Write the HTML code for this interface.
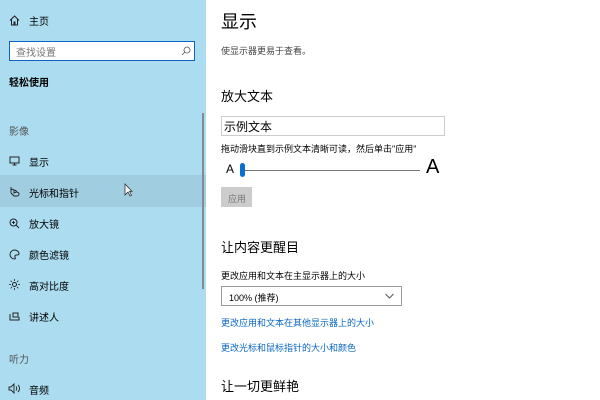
<!DOCTYPE html><html><head><meta charset="utf-8"><style>
*{margin:0;padding:0;box-sizing:border-box}
body{width:600px;height:400px;overflow:hidden;background:#fff;font-family:"Liberation Sans","Noto Sans CJK SC",sans-serif;position:relative;color:#000}
#sb{position:absolute;left:0;top:0;width:206px;height:400px;background:#acdcef}
.t{position:absolute;white-space:nowrap;font-size:10px}
.ic{position:absolute;font-size:10px}
</style></head><body>
<div id="sb">
<div style="position:absolute;left:0;top:175px;width:206px;height:32px;background:#a0cee0"></div>
<div style="position:absolute;left:202px;top:113px;width:2px;height:176px;background:#7d8e96"></div>
<svg class="ic" style="left:9px;top:15px" width="11" height="11" viewBox="0 0 11 11"><path d="M1 5.5L5.5 1 10 5.5M2.5 4v6h2.5V7h1v3h2.5V4" fill="none" stroke="#222" stroke-width="1"/></svg>
<div class="t" style="left:29px;top:13px">主页</div>
<div style="position:absolute;left:9px;top:41px;width:186px;height:20px;background:#fff;border:1px solid #0a66c2"></div>
<div class="t" style="left:16px;top:44px;color:#777">查找设置</div>
<svg class="ic" style="left:181px;top:46px" width="10" height="10" viewBox="0 0 10 10"><circle cx="6" cy="4" r="3" fill="none" stroke="#555" stroke-width=".8"/><path d="M4 6L1 9" stroke="#555" stroke-width=".8"/></svg>
<div class="t" style="left:9px;top:74px;font-weight:bold">轻松使用</div>
<div class="t" style="left:9px;top:123px;color:#555">影像</div>
<svg class="ic" style="left:9px;top:156px" width="11" height="10" viewBox="0 0 11 10"><path d="M1 1h9v6H1zM5.5 7v2M3.5 9h4" fill="none" stroke="#222"/></svg>
<div class="t" style="left:29px;top:154px">显示</div>
<svg class="ic" style="left:9px;top:186px" width="11" height="11" viewBox="0 0 11 11"><path d="M2 1v6M2 4c1-1 2-1 3 0v3c1-1 2-1 2 0M5 5c1-1 2-1 2 0l1 1c1 1 2 0 2 2s-1 2-2 2H5L2 7" fill="none" stroke="#222" stroke-width=".9"/></svg>
<div class="t" style="left:29px;top:185px">光标和指针</div>
<svg class="ic" style="left:124px;top:183px" width="9" height="14" viewBox="0 0 9 14"><path d="M1 1v11l3-3 2 4 1.5-.7-2-4H8z" fill="#fff" stroke="#333" stroke-width=".8"/></svg>
<svg class="ic" style="left:9px;top:218px" width="11" height="11" viewBox="0 0 11 11"><circle cx="4.5" cy="4.5" r="3.5" fill="none" stroke="#222"/><path d="M7 7l3 3M3 4.5h3M4.5 3v3" stroke="#222"/></svg>
<div class="t" style="left:29px;top:216px">放大镜</div>
<svg class="ic" style="left:9px;top:249px" width="11" height="11" viewBox="0 0 11 11"><path d="M5.5 1a4.5 4.5 0 1 0 0 9c1 0 1-1 .5-2s0-2 1.5-2 2.5 0 2.5-1.5A4.5 4 0 0 0 5.5 1z" fill="none" stroke="#222"/></svg>
<div class="t" style="left:29px;top:247px">颜色滤镜</div>
<svg class="ic" style="left:9px;top:279px" width="11" height="11" viewBox="0 0 11 11"><circle cx="5.5" cy="5.5" r="2" fill="none" stroke="#222"/><path d="M5.5 0v2M5.5 9v2M0 5.5h2M9 5.5h2M1.6 1.6l1.4 1.4M8 8l1.4 1.4M1.6 9.4L3 8M8 3l1.4-1.4" stroke="#222" stroke-width=".8"/></svg>
<div class="t" style="left:29px;top:278px">高对比度</div>
<svg class="ic" style="left:9px;top:311px" width="11" height="11" viewBox="0 0 11 11"><path d="M1 3v6h9V6M4 2h5v4H4z" fill="none" stroke="#222"/></svg>
<div class="t" style="left:29px;top:309px">讲述人</div>
<div class="t" style="left:9px;top:351px;color:#555">听力</div>
<svg class="ic" style="left:8px;top:383px" width="13" height="11" viewBox="0 0 13 11"><path d="M1 4h2l3-3v9L3 7H1zM8 3.5c1 1 1 3 0 4M10 2c2 2 2 5 0 7" fill="none" stroke="#222" stroke-width=".9"/></svg>
<div class="t" style="left:29px;top:382px">音频</div>
</div>
<div class="t" style="left:221px;top:8px;font-size:18px">显示</div>
<div class="t" style="left:221px;top:44px;font-size:9px;color:#444">使显示器更易于查看。</div>
<div class="t" style="left:221px;top:86px;font-size:13px">放大文本</div>
<div style="position:absolute;left:221px;top:116px;width:224px;height:20px;border:1px solid #ccc"></div>
<div class="t" style="left:224px;top:118px;font-size:12px">示例文本</div>
<div class="t" style="left:221px;top:142px;font-size:9px">拖动滑块直到示例文本清晰可读，然后单击"应用"</div>
<div class="t" style="left:226px;top:162px;font-size:12px">A</div>
<div style="position:absolute;left:244px;top:170px;width:176px;height:1px;background:#777"></div>
<div style="position:absolute;left:240px;top:163px;width:5px;height:14px;border-radius:3px;background:#0a6fd1"></div>
<div class="t" style="left:426px;top:156px;font-size:20px">A</div>
<div style="position:absolute;left:221px;top:187px;width:31px;height:20px;background:#ccc"></div>
<div class="t" style="left:228px;top:192px;font-size:9px;color:#777">应用</div>
<div class="t" style="left:221px;top:237px;font-size:13px">让内容更醒目</div>
<div class="t" style="left:221px;top:269px;font-size:9px">更改应用和文本在主显示器上的大小</div>
<div style="position:absolute;left:221px;top:286px;width:181px;height:20px;border:1.5px solid #999"></div>
<div class="t" style="left:229px;top:291px;font-size:9px">100% (推荐)</div>
<svg class="ic" style="left:385px;top:293px" width="9" height="6" viewBox="0 0 9 6"><path d="M.5 1l4 4 4-4" fill="none" stroke="#555"/></svg>
<div class="t" style="left:221px;top:316px;font-size:9px;color:#0a66c2">更改应用和文本在其他显示器上的大小</div>
<div class="t" style="left:221px;top:341px;font-size:9px;color:#0a66c2">更改光标和鼠标指针的大小和颜色</div>
<div class="t" style="left:221px;top:376px;font-size:13px">让一切更鲜艳</div>
</body></html>
